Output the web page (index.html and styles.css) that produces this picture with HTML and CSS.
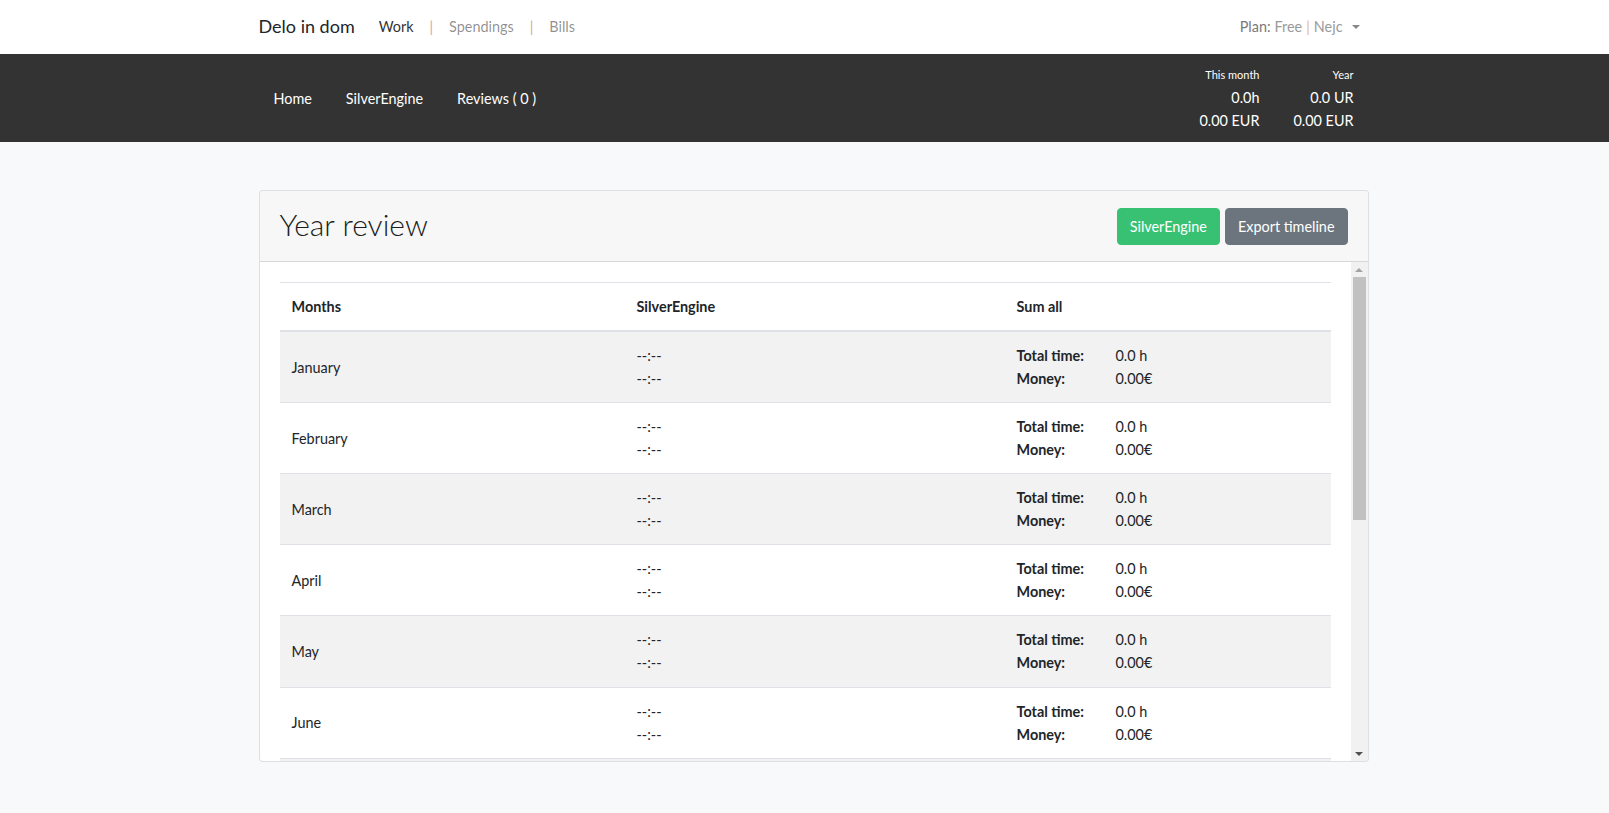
FILE: index.html
```html
<!DOCTYPE html>
<html lang="en">
<head>
<meta charset="utf-8">
<title>Delo in dom - Year review</title>
<link rel="stylesheet" href="styles.css">
</head>
<body>
<nav class="topbar">
  <div class="container topbar-inner">
    <a class="brand" href="#">Delo in dom</a>
    <ul class="mainnav">
      <li class="nav-item active">Work</li>
      <li class="nav-sep">|</li>
      <li class="nav-item">Spendings</li>
      <li class="nav-sep">|</li>
      <li class="nav-item">Bills</li>
    </ul>
    <div class="plan">
      <span class="plan-label">Plan:</span> <span class="plan-val">Free</span> <span class="plan-sep">|</span> <span class="plan-val">Nejc</span><span class="caret"></span>
    </div>
  </div>
</nav>

<div class="subbar">
  <div class="container subbar-inner">
    <ul class="subnav">
      <li>Home</li>
      <li>SilverEngine</li>
      <li>Reviews ( 0 )</li>
    </ul>
    <div class="stats">
      <div class="stat-head">This month</div>
      <div class="stat-head">Year</div>
      <div>0.0h</div>
      <div>0.0 UR</div>
      <div>0.00 EUR</div>
      <div>0.00 EUR</div>
    </div>
  </div>
</div>

<main class="container main">
  <section class="card">
    <header class="card-header">
      <h1 class="card-title">Year review</h1>
      <div class="actions">
        <button class="btn btn-green">SilverEngine</button>
        <button class="btn btn-gray">Export timeline</button>
      </div>
    </header>
    <div class="card-scroller">
      <div class="card-body">
        <table class="table">
          <colgroup><col class="c1"><col class="c2"><col class="c3"></colgroup>
          <thead>
            <tr><th>Months</th><th>SilverEngine</th><th>Sum all</th></tr>
          </thead>
          <tbody>
            <tr><td class="month">January</td><td><div>--:--</div><div>--:--</div></td><td><div class="sum"><b>Total time:</b><span>0.0 h</span><b>Money:</b><span>0.00€</span></div></td></tr>
            <tr><td class="month">February</td><td><div>--:--</div><div>--:--</div></td><td><div class="sum"><b>Total time:</b><span>0.0 h</span><b>Money:</b><span>0.00€</span></div></td></tr>
            <tr><td class="month">March</td><td><div>--:--</div><div>--:--</div></td><td><div class="sum"><b>Total time:</b><span>0.0 h</span><b>Money:</b><span>0.00€</span></div></td></tr>
            <tr><td class="month">April</td><td><div>--:--</div><div>--:--</div></td><td><div class="sum"><b>Total time:</b><span>0.0 h</span><b>Money:</b><span>0.00€</span></div></td></tr>
            <tr><td class="month">May</td><td><div>--:--</div><div>--:--</div></td><td><div class="sum"><b>Total time:</b><span>0.0 h</span><b>Money:</b><span>0.00€</span></div></td></tr>
            <tr><td class="month">June</td><td><div>--:--</div><div>--:--</div></td><td><div class="sum"><b>Total time:</b><span>0.0 h</span><b>Money:</b><span>0.00€</span></div></td></tr>
            <tr><td class="month">July</td><td><div>--:--</div><div>--:--</div></td><td><div class="sum"><b>Total time:</b><span>0.0 h</span><b>Money:</b><span>0.00€</span></div></td></tr>
          </tbody>
        </table>
      </div>
      <div class="scrollbar" aria-hidden="true">
        <div class="sb-btn sb-up"><span class="arrow-up"></span></div>
        <div class="sb-track"><div class="sb-thumb"></div></div>
        <div class="sb-btn sb-down"><span class="arrow-down"></span></div>
      </div>
    </div>
  </section>
</main>
</body>
</html>
```

FILE: styles.css
```css
* { box-sizing: border-box; }

html, body {
  margin: 0;
  padding: 0;
}

body {
  font-family: "Lato", "Noto Sans", "Liberation Sans", sans-serif;
  font-size: 14.4px;
  line-height: 1.6;
  color: #212529;
  background: #f8f9fa;
  height: 813px;
  overflow: hidden;
}

.container {
  width: 1110px;
  margin-left: calc(50% - 546px);
}

/* ---------- top bar ---------- */
.topbar {
  background: #fff;
  height: 54px;
}

.topbar-inner {
  height: 54px;
  display: flex;
  align-items: center;
}

.brand {
  font-size: 18px;
  color: #212529;
  text-decoration: none;
  margin-right: 16px;
  padding-bottom: 1px;
}

.mainnav {
  list-style: none;
  margin: 0;
  padding: 0;
  display: flex;
  align-items: center;
}

.nav-item {
  padding: 0 8px;
  color: rgba(0, 0, 0, 0.45);
}

.nav-item.active {
  color: #333;
}

.nav-sep {
  padding: 0 8px;
  color: #d9a3a6;
}

.plan {
  margin-left: auto;
  padding-right: 9px;
  color: #9a9a9a;
  display: flex;
  align-items: center;
  gap: 4px;
}

.plan-label {
  color: #7a7a7a;
}

.plan-sep {
  color: #e8b86a;
}

.caret {
  display: inline-block;
  margin-left: 5px;
  width: 0;
  height: 0;
  border-top: 4.5px solid #888;
  border-left: 4.5px solid transparent;
  border-right: 4.5px solid transparent;
}

/* ---------- sub bar ---------- */
.subbar {
  background: #333;
  color: #fff;
  height: 88px;
}

.subbar-inner {
  height: 88px;
  display: flex;
  align-items: center;
}

.subnav {
  list-style: none;
  margin: 0;
  padding: 0;
  display: flex;
  margin-top: 1px;
}

.subnav li {
  padding: 0 17px 0 15px;
  margin-right: 2px;
}

.stats {
  margin-left: auto;
  margin-right: 15px;
  align-self: flex-start;
  padding-top: 10px;
  display: grid;
  grid-template-columns: auto auto;
  column-gap: 34px;
  justify-items: end;
  line-height: 23px;
}

.stat-head {
  font-size: 11px;
  line-height: 22px;
}

/* ---------- main ---------- */
.main {
  padding-top: 48px;
}

.card {
  background: #fff;
  border: 1px solid rgba(0, 0, 0, 0.125);
  border-radius: 4px;
  overflow: hidden;
}

.card-header {
  background: #f7f7f7;
  border-bottom: 1px solid rgba(0, 0, 0, 0.125);
  height: 71px;
  padding: 0 20px;
  display: flex;
  align-items: center;
}

.card-title {
  margin: 0;
  font-size: 30px;
  font-weight: 300;
  line-height: 1.2;
  color: #1a1d20;
  padding-bottom: 4px;
}

.actions {
  margin-left: auto;
  display: flex;
  gap: 5px;
  padding-top: 1px;
}

.btn {
  font-family: inherit;
  font-size: 14.4px;
  line-height: 23px;
  padding: 6px 12px;
  border: 1px solid transparent;
  border-radius: 4px;
  color: #fff;
  cursor: pointer;
}

.btn-green {
  background: #38c172;
  border-color: #38c172;
}

.btn-gray {
  background: #6c757d;
  border-color: #6c757d;
}

/* ---------- scroll area ---------- */
.card-scroller {
  height: 499px;
  display: flex;
}

.card-body {
  flex: 1;
  min-width: 0;
  overflow: hidden;
  padding: 20px;
}

.scrollbar {
  width: 17px;
  flex: none;
  background: #f1f1f1;
  display: flex;
  flex-direction: column;
}

.sb-btn {
  height: 15px;
  flex: none;
  display: flex;
  align-items: center;
  justify-content: center;
}

.arrow-up {
  width: 0;
  height: 0;
  border-bottom: 4px solid #a3a3a3;
  border-left: 4px solid transparent;
  border-right: 4px solid transparent;
  margin-top: 1px;
}

.arrow-down {
  width: 0;
  height: 0;
  border-top: 4px solid #505050;
  border-left: 4px solid transparent;
  border-right: 4px solid transparent;
  margin-top: 1px;
}

.sb-track {
  flex: 1;
  padding: 0 2px;
}

.sb-thumb {
  height: 243px;
  background: #c1c1c1;
}

/* ---------- table ---------- */
.table {
  width: 100%;
  border-collapse: collapse;
  margin-bottom: 16px;
}

.c1 { width: 345px; }
.c2 { width: 380px; }

.table th,
.table td {
  padding: 12px;
  text-align: left;
  border-top: 1px solid #dee2e6;
  vertical-align: top;
}

.table th {
  font-weight: 700;
  border-bottom: 2px solid #dee2e6;
  vertical-align: bottom;
}

.table tbody tr:nth-child(odd) {
  background: rgba(0, 0, 0, 0.05);
}

.table td.month {
  vertical-align: middle;
}

.sum {
  display: grid;
  grid-template-columns: 99px auto;
}

.sum b {
  font-weight: 700;
}
```
